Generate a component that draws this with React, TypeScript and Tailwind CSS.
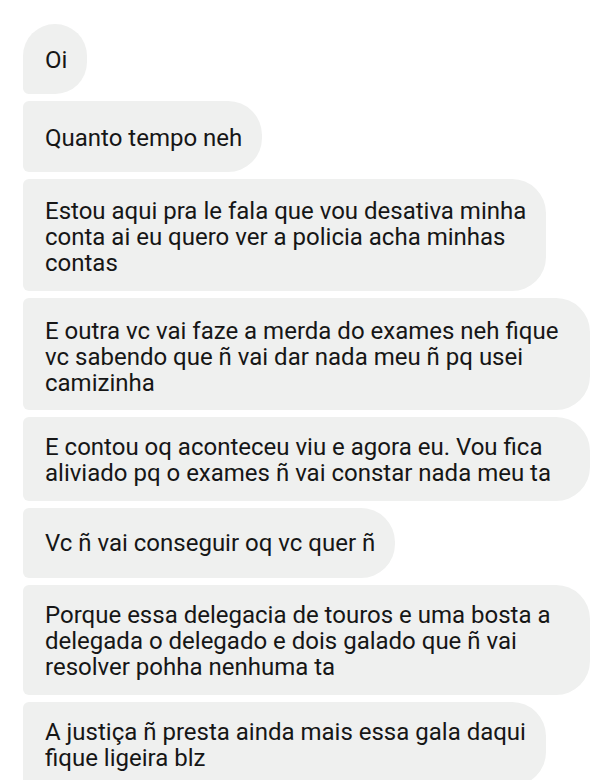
import React from "react";

type Message = {
  lines: string[];
  // spacing and width differ a little per bubble
  box: string;
  first?: boolean;
};

const messages: Message[] = [
  { lines: ["Oi"], box: "pt-[23px] pb-[21px] w-fit", first: true },
  { lines: ["Quanto tempo neh"], box: "pt-[24px] pb-[21px] w-fit" },
  {
    lines: [
      "Estou aqui pra le fala que vou desativa minha",
      "conta ai eu quero ver a policia acha minhas",
      "contas",
    ],
    box: "pt-[19px] pb-[15px] w-fit",
  },
  {
    lines: [
      "E outra vc vai faze a merda do exames neh fique",
      "vc sabendo que ñ vai dar nada meu ñ pq usei",
      "camizinha",
    ],
    box: "pt-[20px] pb-[14px] w-[567px]",
  },
  {
    lines: [
      "E contou oq aconteceu viu e agora eu. Vou fica",
      "aliviado pq o exames ñ vai constar nada meu ta",
    ],
    box: "pt-[17px] pb-[15px] w-[567px]",
  },
  { lines: ["Vc ñ vai conseguir oq vc quer ñ"], box: "pt-[22px] pb-[22px] w-fit" },
  {
    lines: [
      "Porque essa delegacia de touros e uma bosta a",
      "delegada o delegado e dois galado que ñ vai",
      "resolver pohha nenhuma ta",
    ],
    box: "pt-[17px] pb-[15px] w-[567px]",
  },
  {
    lines: ["A justiça ñ presta ainda mais essa gala daqui", "fique ligeira blz"],
    box: "pt-[17px] pb-[15px] w-fit",
  },
];

function Bubble({ msg }: { msg: Message }) {
  return (
    <div
      className={`${msg.box} bg-[#eff0ef] pl-[22px] pr-[20px] rounded-r-[34px] ${
        msg.first ? "rounded-tl-[34px] rounded-bl-[6px]" : "rounded-l-[6px]"
      }`}
    >
      {msg.lines.map((line, i) => (
        <div key={i} className="whitespace-nowrap">
          {line}
        </div>
      ))}
    </div>
  );
}

export default function App() {
  return (
    <div
      className="w-[600px] h-[780px] overflow-hidden bg-white text-[#161616] text-[24px] leading-[26px]"
      style={{ fontFamily: "Roboto, 'Liberation Sans', sans-serif" }}
    >
      <div className="flex flex-col items-start gap-[7px] pt-[24px] pl-[23px]">
        {messages.map((m, i) => (
          <Bubble key={i} msg={m} />
        ))}
      </div>
    </div>
  );
}
